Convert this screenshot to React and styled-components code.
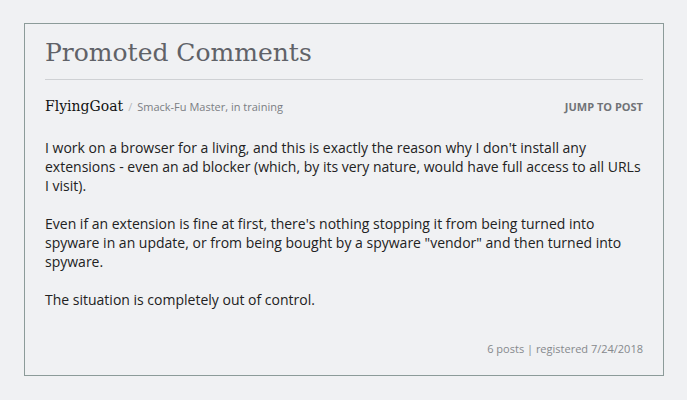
import React from "react";
import styled, { createGlobalStyle } from "styled-components";

const Global = createGlobalStyle`
  html, body { margin: 0; padding: 0; background: #f0f1f3; }
  body { font-family: "Open Sans", "Liberation Sans", sans-serif; overflow: hidden; }
`;

const Page = styled.div`
  width: 687px;
  height: 400px;
  overflow: hidden;
  padding: 0 23px 0 24px;
  box-sizing: border-box;
`;

const Clipped = styled.p`
  margin: -19px 0 23px 21px;
  font-size: 14px;
  line-height: 19px;
  color: #222;
  white-space: nowrap;
`;

const Box = styled.section`
  border: 1px solid #8c9b99;
  padding: 12px 20px 19px;
  width: 640px;
  height: 353px;
  box-sizing: border-box;
  display: flex;
  flex-direction: column;
`;

const Title = styled.h2`
  margin: 0;
  font-family: "DejaVu Serif", "Liberation Serif", serif;
  font-weight: normal;
  font-size: 25px;
  line-height: 34px;
  color: #606268;
  padding-bottom: 9px;
  border-bottom: 1px solid #cfd1d4;
`;

const Header = styled.div`
  display: flex;
  align-items: baseline;
  justify-content: space-between;
  margin-top: 18px;
`;

const Author = styled.div`
  display: flex;
  align-items: baseline;
  gap: 5px;
`;

const Name = styled.span`
  font-family: "DejaVu Serif", "Liberation Serif", serif;
  font-size: 14px;
  color: #111;
`;

const Slash = styled.span`
  font-size: 11px;
  color: #b5b8bc;
`;

const Rank = styled.span`
  font-size: 11px;
  color: #7b7e83;
`;

const Jump = styled.a`
  font-size: 11px;
  font-weight: 700;
  color: #707377;
  text-transform: uppercase;
  text-decoration: none;
`;

const Body = styled.div`
  margin-top: 24px;
  font-size: 14px;
  line-height: 19px;
  color: #222;
  p { margin: 0 0 19px; }
`;

const Footer = styled.div`
  margin-top: auto;
  text-align: right;
  font-size: 11px;
  color: #86898d;
`;

export default function App() {
  return (
    <>
      <Global />
      <Page>
        <Clipped>Surely there's a point past which the whole model has broken down.</Clipped>
        <Box>
          <Title>Promoted Comments</Title>
          <Header>
            <Author>
              <Name>FlyingGoat</Name>
              <Slash>/</Slash>
              <Rank>Smack-Fu Master, in training</Rank>
            </Author>
            <Jump href="#">Jump to post</Jump>
          </Header>
          <Body>
            <p>
              I work on a browser for a living, and this is exactly the reason why I don't install any
              extensions - even an ad blocker (which, by its very nature, would have full access to all URLs
              I visit).
            </p>
            <p>
              Even if an extension is fine at first, there's nothing stopping it from being turned into
              spyware in an update, or from being bought by a spyware "vendor" and then turned into
              spyware.
            </p>
            <p>The situation is completely out of control.</p>
          </Body>
          <Footer>6 posts | registered 7/24/2018</Footer>
        </Box>
      </Page>
    </>
  );
}
